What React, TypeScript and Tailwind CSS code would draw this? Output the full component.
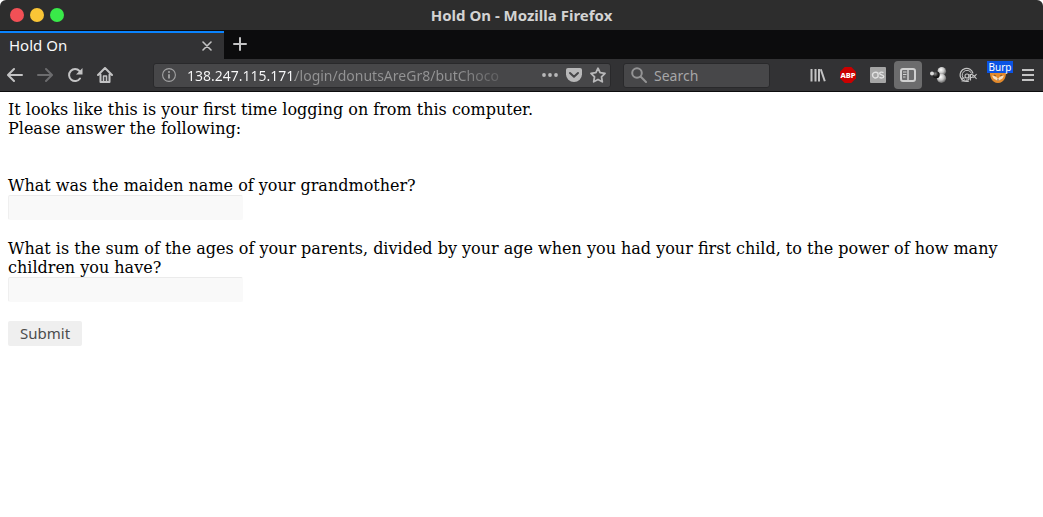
import type { ReactNode } from "react";

type IconButtonProps = {
  label: string;
  active?: boolean;
  disabled?: boolean;
  children: ReactNode;
};

function IconButton({ label, active, disabled, children }: IconButtonProps) {
  return (
    <button
      type="button"
      aria-label={label}
      disabled={disabled}
      className={
        active
          ? "mx-px flex h-7 w-7 shrink-0 items-center justify-center rounded bg-[#6c6c6d] text-[#d0d0d0]"
          : "flex h-7 w-[30px] shrink-0 items-center justify-center text-[#c3c3c4] disabled:text-[#6c6c6e]"
      }
    >
      {children}
    </button>
  );
}

const stroke = {
  width: 16,
  height: 16,
  viewBox: "0 0 16 16",
  fill: "none",
  stroke: "currentColor",
  strokeWidth: 2,
  strokeLinecap: "round",
  strokeLinejoin: "round",
} as const;

function TitleBar() {
  return (
    <header className="relative flex h-[30px] items-center justify-center rounded-t-md bg-[#2d2d2d]">
      <div className="absolute left-[10px] flex gap-[6px]">
        <button type="button" aria-label="Close window" className="h-[14px] w-[14px] rounded-full bg-[#f25056]" />
        <button type="button" aria-label="Minimize window" className="h-[14px] w-[14px] rounded-full bg-[#fac536]" />
        <button type="button" aria-label="Maximize window" className="h-[14px] w-[14px] rounded-full bg-[#39ea49]" />
      </div>
      <h1 className="text-[15px] font-bold text-[#d3d3d3]">Hold On - Mozilla Firefox</h1>
    </header>
  );
}

function TabStrip() {
  return (
    <div className="flex h-[29px] bg-[#0c0c0d] pt-px">
      <div className="flex w-56 items-center justify-between border-t-2 border-[#0a84ff] bg-[#323234] pr-3 pl-[9px]">
        <span className="pb-[3px] text-[15px] leading-5 text-[#f9f9fa]">Hold On</span>
        <button type="button" aria-label="Close tab" className="text-[#c3c3c4]">
          <svg width="10" height="10" viewBox="0 0 10 10" fill="none" stroke="currentColor" strokeWidth="1.6" strokeLinecap="round">
            <path d="M1 1l8 8M9 1l-8 8" />
          </svg>
        </button>
      </div>
      <button type="button" aria-label="New tab" className="flex w-8 items-center justify-center pb-[2px] text-[#c3c3c4]">
        <svg width="14" height="14" viewBox="0 0 14 14" fill="none" stroke="currentColor" strokeWidth="2" strokeLinecap="round">
          <path d="M7 1v12M1 7h12" />
        </svg>
      </button>
    </div>
  );
}

function AddressBar() {
  return (
    <div className="ml-[33px] flex h-[25px] min-w-0 flex-1 items-center rounded-[3px] border border-[#29292b] bg-[#474749] pr-1 pl-2 text-[#b8b8b9]">
      <button type="button" aria-label="Site information" className="shrink-0 text-[#a3a3a4]">
        <svg width="14" height="14" viewBox="0 0 14 14" fill="none" stroke="currentColor">
          <circle cx="7" cy="7" r="6.4" strokeWidth="1.1" />
          <path d="M7 6.2v4.4" strokeWidth="1.8" />
          <circle cx="7" cy="4" r="1" fill="currentColor" stroke="none" />
        </svg>
      </button>
      <input
        type="text"
        aria-label="Address"
        defaultValue="138.247.115.171/login/donutsAreGr8/butChoco"
        className="ml-[11px] h-full min-w-0 flex-1 bg-[linear-gradient(90deg,#f9f9fa_108px,#949495_108px,#949495_270px,#47474900_332px)] bg-clip-text text-[14px] text-transparent caret-white outline-none"
      />
      <div className="ml-3 flex shrink-0 items-center gap-2">
        <button type="button" aria-label="Page actions">
          <svg width="16" height="16" viewBox="0 0 16 16" fill="currentColor">
            <circle cx="2" cy="8" r="1.9" />
            <circle cx="8" cy="8" r="1.9" />
            <circle cx="14" cy="8" r="1.9" />
          </svg>
        </button>
        <button type="button" aria-label="Save to Pocket">
          <svg width="16" height="16" viewBox="0 0 16 16">
            <path d="M2 1h12a2 2 0 0 1 2 2v4.2a8 7.8 0 0 1-16 0V3a2 2 0 0 1 2-2z" fill="currentColor" />
            <path d="M4 6l4 3.8L12 6" fill="none" stroke="#474749" strokeWidth="2" strokeLinecap="round" strokeLinejoin="round" />
          </svg>
        </button>
        <button type="button" aria-label="Bookmark this page">
          <svg {...stroke} strokeWidth={1.8}>
            <path d="M8 1.2l2.1 4.4 4.900.7-3.5 3.5.8 5L8 12.500l-4.300 2.300.800-5L1 6.300l4.900-.700z" />
          </svg>
        </button>
      </div>
    </div>
  );
}

function SearchBar() {
  return (
    <div className="mr-[33px] ml-3 flex h-[25px] w-[147px] shrink-0 items-center rounded-[3px] border border-[#29292b] bg-[#474749] pl-[7px]">
      <svg width="16" height="16" viewBox="0 0 16 16" fill="none" stroke="#949495" strokeWidth="2" strokeLinecap="round" className="shrink-0">
        <circle cx="6" cy="6" r="4.8" />
        <path d="M9.8 9.8L15 15" />
      </svg>
      <input
        type="search"
        aria-label="Search"
        placeholder="Search"
        className="ml-[7px] h-full min-w-0 flex-1 bg-transparent text-[14px] text-white outline-none placeholder:text-[#a6a6a7]"
      />
    </div>
  );
}

function Extensions() {
  return (
    <>
      <IconButton label="Library">
        <svg {...stroke} strokeLinecap="butt">
          <path d="M1.500 2v12.500M5.500 2v12.500M9 2v12.500M10.800 2.200l4 12" />
        </svg>
      </IconButton>
      <IconButton label="Adblock Plus">
        <svg width="16" height="16" viewBox="0 0 16 16">
          <path d="M4.7 0h6.6L16 4.7v6.6L11.3 16H4.7L0 11.3V4.7z" fill="#cb0000" />
          <text x="8" y="11" textAnchor="middle" fontSize="7.5" fontWeight="800" fill="#fff">ABP</text>
        </svg>
      </IconButton>
      <IconButton label="Open source scripts">
        <svg width="16" height="16" viewBox="0 0 16 16" fill="none">
          <rect width="16" height="16" rx="1" fill="#a5a5a5" />
          <path d="M8 6.200C6.500 4.500 2.500 5 2.500 8s3.500 4 5.500 1.800V5.500" stroke="#e2e2e2" strokeWidth="1.400" />
          <path d="M13.5 5.600C12 4.700 9.500 5 9.700 6.600c.2 1.600 4 1.100 4 2.900 0 1.700-2.600 1.800-4.300.900" stroke="#e2e2e2" strokeWidth="1.400" />
        </svg>
      </IconButton>
      <IconButton label="Sidebar" active>
        <svg {...stroke}>
          <rect x="1" y="2" width="14" height="12" rx="2" />
          <path d="M8 2v12" strokeWidth="1.500" />
          <path d="M3 5h3.500M3 7.500h3.500M3 10h2.500" strokeWidth="1" strokeLinecap="butt" />
        </svg>
      </IconButton>
      <IconButton label="Proxy switcher">
        <svg width="18" height="18" viewBox="0 0 18 18">
          <defs>
            <radialGradient id="light" cx=".4" cy=".35" r=".7">
              <stop offset="0" stopColor="#fff" />
              <stop offset=".5" stopColor="#c4c4c4" />
              <stop offset="1" stopColor="#555" />
            </radialGradient>
            <radialGradient id="dark" cx=".35" cy=".35" r=".7">
              <stop offset="0" stopColor="#8a8a8a" />
              <stop offset=".6" stopColor="#222" />
              <stop offset="1" stopColor="#080808" />
            </radialGradient>
          </defs>
          <circle cx="12.800" cy="5.200" r="4.300" fill="url(#light)" />
          <circle cx="12.500" cy="12.300" r="4.600" fill="url(#light)" />
          <circle cx="7.200" cy="8.800" r="3.500" fill="url(#dark)" />
          <circle cx="3" cy="7.500" r="2" fill="#d8d8d8" />
        </svg>
      </IconButton>
      <IconButton label="User agent switcher">
        <svg width="18" height="16" viewBox="0 0 18 16" fill="none" stroke="#c4c4c4">
          <path d="M14 6.500A6.500 6.500 0 1 0 10 14" strokeWidth="1.200" />
          <path d="M12.500 6.500A4.800 4.800 0 1 0 6 12.500" strokeWidth="1" />
          <path d="M2 12l3.500-1.500M2.500 14h5" strokeWidth="1" />
          <circle cx="8" cy="9" r="2" strokeWidth="1.100" />
          <path d="M10 7v4.500q0 2-3 1.500M11.500 13.500V7.500h1.500q1 0 1 1.500t-1 1.500h-1M14.500 11l3-4M14.500 8l3 4" strokeWidth="1.100" />
        </svg>
      </IconButton>
      <div className="relative">
        <IconButton label="FoxyProxy: Burp">
          <svg width="18" height="18" viewBox="0 0 18 18">
            <path d="M1 5l4 1.500h8L17 5c.5 5-1.500 12-8 12S.5 10 1 5z" fill="#e38a2c" />
            <path d="M3 9.500l4 1 2 2.500 2-2.500 4-1-1.500 3L9 15l-4.500-2.500z" fill="#f7dfc2" />
            <path d="M5 9l2 1M13 9l-2 1M8 14h2" stroke="#8a5a2b" strokeWidth="1.200" />
          </svg>
        </IconButton>
        <span className="pointer-events-none absolute top-0 left-1 flex h-3 w-[26px] items-center justify-center bg-[#0a53e4] text-[10px] leading-3 text-white">
          Burp
        </span>
      </div>
      <IconButton label="Open menu">
        <svg {...stroke} strokeLinecap="butt">
          <path d="M2 3h12M2 8h12M2 13h12" />
        </svg>
      </IconButton>
    </>
  );
}

function Toolbar() {
  return (
    <nav aria-label="Browser toolbar" className="flex h-[33px] items-center border-b border-[#0c0c0d] bg-[#323234]">
      <IconButton label="Back">
        <svg {...stroke}>
          <path d="M15 8H1.500M7 2L1 8l6 6" />
        </svg>
      </IconButton>
      <IconButton label="Forward" disabled>
        <svg {...stroke}>
          <path d="M1 8h13.500M9 2l6 6-6 6" />
        </svg>
      </IconButton>
      <IconButton label="Reload">
        <svg {...stroke}>
          <path d="M13 11.500A6 6 0 1 1 12.500 4" />
          <path d="M15.500 1v6.500H9z" fill="currentColor" stroke="none" />
        </svg>
      </IconButton>
      <IconButton label="Home">
        <svg {...stroke}>
          <path d="M1 8l7-7 7 7M3.500 7.500V15h9V7.500" />
          <path d="M6.500 15V9h3v6" strokeWidth="1.500" strokeLinecap="butt" />
        </svg>
      </IconButton>
      <AddressBar />
      <SearchBar />
      <Extensions />
    </nav>
  );
}

const fieldClass =
  "block h-[25px] w-[235px] rounded-[2px] border border-[#f9f9f9] border-t-[#ebebeb] border-l-[#efefef] bg-[#f9f9f9] px-1 text-[15px] outline-none";

export default function App() {
  return (
    <div className="min-h-screen bg-white font-['Noto_Sans',sans-serif]">
      <TitleBar />
      <TabStrip />
      <Toolbar />
      <main className="p-2 font-['DejaVu_Serif',serif] text-[16px] leading-[19px] text-black">
        <p>
          It looks like this is your first time logging on from this computer.
          <br />
          Please answer the following:
        </p>
        <form className="mt-[38px]" onSubmit={(event) => event.preventDefault()}>
          <label htmlFor="grandmother">What was the maiden name of your grandmother?</label>
          <input id="grandmother" type="text" className={fieldClass} />
          <div className="mt-[19px]">
            <label htmlFor="ages">
              What is the sum of the ages of your parents, divided by your age when you had your first child, to the
              power of how many children you have?
            </label>
            <input id="ages" type="text" className={fieldClass} />
          </div>
          <button
            type="submit"
            className="mt-[19px] flex h-[25px] items-center rounded-[2px] bg-[#efefef] px-3 font-['Noto_Sans',sans-serif] text-[15px] text-[#4c4c4c]"
          >
            Submit
          </button>
        </form>
      </main>
    </div>
  );
}
